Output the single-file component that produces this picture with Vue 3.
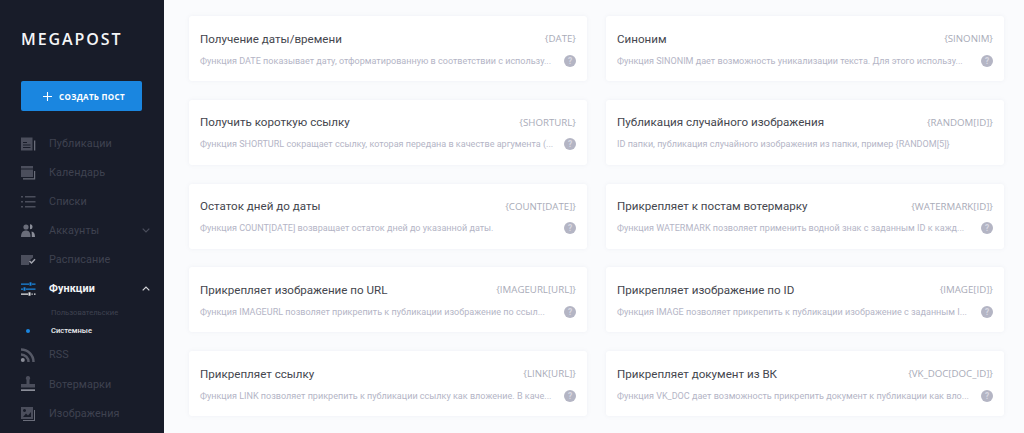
<script setup>
const nav1 = [
  { label: 'Публикации', icon: 'pub' },
  { label: 'Календарь', icon: 'cal' },
  { label: 'Списки', icon: 'list' },
  { label: 'Аккаунты', icon: 'acc', chev: 'down' },
  { label: 'Расписание', icon: 'sched' },
]
const nav2 = [
  { label: 'RSS', icon: 'rss' },
  { label: 'Вотермарки', icon: 'stamp' },
  { label: 'Изображения', icon: 'img' },
]
const cards = [
  ['Получение даты/времени', '{DATE}', 'Функция DATE показывает дату, отформатированную в соответствии с использу...', true],
  ['Синоним', '{SINONIM}', 'Функция SINONIM дает возможность уникализации текста. Для этого использу...', true],
  ['Получить короткую ссылку', '{SHORTURL}', 'Функция SHORTURL сокращает ссылку, которая передана в качестве аргумента (...', true],
  ['Публикация случайного изображения', '{RANDOM[ID]}', 'ID папки, публикация случайного изображения из папки, пример {RANDOM[5]}', false],
  ['Остаток дней до даты', '{COUNT[DATE]}', 'Функция COUNT[DATE] возвращает остаток дней до указанной даты.', true],
  ['Прикрепляет к постам вотермарку', '{WATERMARK[ID]}', 'Функция WATERMARK позволяет применить водной знак с заданным ID к кажд...', true],
  ['Прикрепляет изображение по URL', '{IMAGEURL[URL]}', 'Функция IMAGEURL позволяет прикрепить к публикации изображение по ссыл...', true],
  ['Прикрепляет изображение по ID', '{IMAGE[ID]}', 'Функция IMAGE позволяет прикрепить к публикации изображение с заданным I...', true],
  ['Прикрепляет ссылку', '{LINK[URL]}', 'Функция LINK позволяет прикрепить к публикации ссылку как вложение. В каче...', true],
  ['Прикрепляет документ из ВК', '{VK_DOC[DOC_ID]}', 'Функция VK_DOC дает возможность прикрепить документ к публикации как вло...', true],
]
</script>

<template>
  <div class="page">
    <aside class="side">
      <div class="logo">MEGAPOST</div>
      <button class="create">
        <svg width="9" height="9" viewBox="0 0 10 10"><path d="M5 0v10M0 5h10" stroke="#fff" stroke-width="1.2"/></svg>
        <span>СОЗДАТЬ ПОСТ</span>
      </button>
      <nav class="nav">
        <div v-for="n in nav1" :key="n.label" class="item">
          <svg class="ico" width="16" height="16" viewBox="0 0 16 16" fill="#4b4e5c">
            <template v-if="n.icon === 'pub'">
              <path fill-rule="evenodd" d="M1 1.500h11.500v13H1zM3 6h4v1H3zM3 8.500h7.500v1H3zM3 11h7.500v1H3z"/><path d="M14 4.500h1.300v10H14z" fill="#6a6d7a"/>
            </template>
            <template v-else-if="n.icon === 'cal'">
              <path d="M1 1h12v2.500H1zM1 4.500h12V12H1z"/><path d="M3 14.500h12.200V6H14v7.300H3z" fill="#6a6d7a"/>
            </template>
            <template v-else-if="n.icon === 'list'">
              <path d="M1 2h2v1.500H1zM5 2h10.500v1.500H5zM1 7h2v1.500H1zM5 7h10.500v1.500H5zM1 12h2v1.500H1zM5 12h10.500v1.500H5z"/>
            </template>
            <template v-else-if="n.icon === 'acc'">
              <circle cx="6" cy="4" r="2.600" fill="#6a6d7a"/><path d="M10 1.200a2.500 2.500 0 0 1 0 5z" fill="#8a8d98"/><path d="M1 14c0-4.500 2-6.500 5-6.500s4.500 2 4.500 6.500z" fill="#6a6d7a"/><path d="M11.500 8.500c2.300.2 3.500 2 3.500 5.500h-3.200c0-2.500 0-4-.3-5.500z" fill="#8a8d98"/>
            </template>
            <template v-else>
              <path d="M1 3h12v2.500l-3.500 3L9 13H1z"/><path d="M9.500 9l2 2L15 7.200" fill="none" stroke="#a3a5af" stroke-width="1.500"/>
            </template>
          </svg>
          <span>{{ n.label }}</span>
          <svg v-if="n.chev" class="chev" width="8" height="5" viewBox="0 0 8 5"><path d="M.7.7 4 4l3.300-3.300" fill="none" stroke="#4b4e5c" stroke-width="1.200"/></svg>
        </div>
        <div class="item active">
          <svg class="ico" width="16" height="16" viewBox="0 0 16 16">
            <path d="M1 2.500h8v1.200H1zM12 2.500h3.500v1.200H12z" fill="#1a86e0"/><rect x="9.500" y="1.300" width="2" height="3.400" fill="#1a86e0"/>
            <path d="M1 7.500h2v1.200H1zM6 7.500h9.500v1.200H6z" fill="#1a86e0"/><rect x="3.500" y="6.300" width="2" height="3.400" fill="#1a86e0"/>
            <path d="M1 12.500h7v1.200H1zM11.500 12.500h1.200v1.200h-1.200zM14 12.500h1.500v1.200H14z" fill="#e6e7ea"/><rect x="8.500" y="11.300" width="2" height="3.400" fill="#e6e7ea"/>
          </svg>
          <span>Функции</span>
          <svg class="chev" width="8" height="5" viewBox="0 0 8 5"><path d="M.7 4.300 4 1l3.300 3.300" fill="none" stroke="#d5d6da" stroke-width="1.200"/></svg>
        </div>
        <div class="sub">
          <div class="subitem">Пользовательские</div>
          <div class="subitem on"><i class="dot"></i>Системные</div>
        </div>
        <div v-for="n in nav2" :key="n.label" class="item tall">
          <svg class="ico" width="16" height="16" viewBox="0 0 16 16" fill="#4b4e5c">
            <template v-if="n.icon === 'rss'">
              <circle cx="2.800" cy="13" r="2" fill="#8a8d98"/>
              <path d="M1 7.500A7.500 7.500 0 0 1 8.500 15M1 2.500A12.500 12.500 0 0 1 13.500 15" fill="none" stroke="#565966" stroke-width="2.500"/>
            </template>
            <template v-else-if="n.icon === 'stamp'">
              <path d="M8 0a2.200 2.200 0 0 1 1.500 3.800L9.500 8H15v3.500H1V8h5.500V3.800A2.200 2.200 0 0 1 8 0z"/><path d="M1 13.300h14V15H1z" fill="#8a8d98"/>
            </template>
            <template v-else>
              <path fill-rule="evenodd" d="M1 1h12v12H1zM4.500 3a1.500 1.500 0 1 0 .01 0zM3 11l3-3.500 2 2 3-3.500v5z"/><path d="M3 15h12V4h-1v10H3z" fill="#6a6d7a"/>
            </template>
          </svg>
          <span>{{ n.label }}</span>
        </div>
      </nav>
    </aside>
    <main class="grid">
      <section v-for="c in cards" :key="c[1]" class="card">
        <div class="row">
          <h3>{{ c[0] }}</h3>
          <span class="code">{{ c[1] }}</span>
        </div>
        <div class="row low">
          <p>{{ c[2] }}</p>
          <span v-if="c[3]" class="help">?</span>
        </div>
      </section>
    </main>
  </div>
</template>

<style scoped>
.page { display: flex; width: 1024px; height: 433px; overflow: hidden; background: #fafbfd; font-family: Roboto, "Open Sans", sans-serif; }
.side { width: 164px; flex: none; background: #181c29; box-sizing: border-box; padding-top: 30px; }
.logo { margin-left: 21px; color: #f4f5f7; font: 600 16px/18px "Open Sans", sans-serif; letter-spacing: 1.900px; }
.create { display: flex; align-items: center; justify-content: center; gap: 7px; width: 121px; height: 30px; margin: 33px 0 0 21px; padding: 0 0 0 5px; box-sizing: border-box; border: 0; border-radius: 2px; background: #1a86e0; color: #fff; font: 700 8px "Open Sans", sans-serif; letter-spacing: .3px; }
.nav { margin-top: 18px; }
.item { display: flex; align-items: center; height: 29px; padding-left: 20px; color: #3f4250; font-size: 10.800px; position: relative; letter-spacing: .1px; }
.item.tall { height: 29.500px; }
.ico { flex: none; margin-right: 13px; }
.chev { position: absolute; left: 142px; top: 12px; }
.active { color: #f2f3f5; font-weight: 700; }
.sub { margin-top: 1px; }
.subitem { height: 18px; line-height: 18px; padding-left: 51px; font-size: 7.600px; color: #3f4250; position: relative; }
.subitem.on { color: #eceef1; font-weight: 500; }
.dot { position: absolute; left: 26px; top: 7px; width: 4px; height: 4px; border-radius: 50%; background: #1a86e0; }
.grid { flex: 1; display: grid; grid-template-columns: 398px 398px; column-gap: 19px; row-gap: 18.750px; align-content: start; padding: 16px 0 0 25px; }
.card { height: 65px; box-sizing: border-box; padding: 14.500px 11px 0 11px; background: #fff; border-radius: 3px; box-shadow: 0 0 4px rgba(120,130,170,.09); }
.row { display: flex; justify-content: space-between; align-items: center; height: 16px; }
.low { margin-top: 7px; height: 14px; }
h3 { margin: 0; font-size: 11.600px; font-weight: 400; color: #44464e; white-space: nowrap; }
.code { font-size: 9.700px; color: #a9abb8; font-family: "Open Sans", sans-serif; }
p { margin: 0; font-size: 9.050px; color: #b4b5c6; white-space: nowrap; }
.help { width: 12px; height: 12px; border-radius: 50%; background: #b4b5c4; color: #d8d8e2; font-size: 8.500px; font-weight: 700; line-height: 12px; text-align: center; }
</style>
